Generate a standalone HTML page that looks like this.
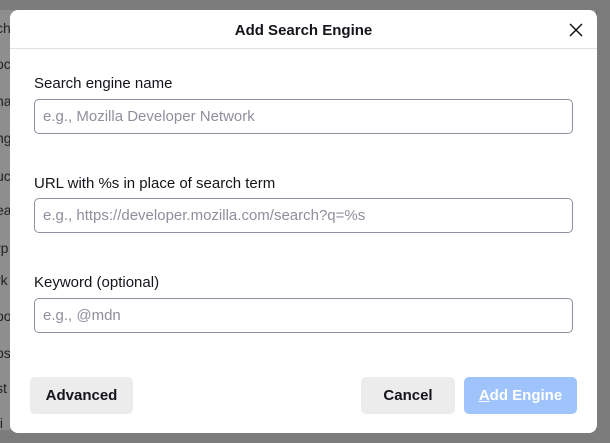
<!DOCTYPE html>
<html><head><style>
body{margin:0;width:610px;height:443px;background:#7c7c7c;position:relative;overflow:hidden;font-family:"Liberation Sans",sans-serif}
.bg{position:absolute;left:0;top:10px;width:596px;height:420px;background:#8e8e8e;border-right:1px solid #666}
.bgt{position:absolute;left:-4px;font-size:14px;color:#222}
.dlg{position:absolute;left:10px;top:10px;width:587px;height:423px;background:#fff;border-radius:8px}
.title{position:absolute;left:0;right:0;top:12px;text-align:center;font-weight:bold;font-size:15px;color:#15141a}
.hr{position:absolute;left:0;right:0;top:38px;height:1px;background:#e0e0e6}
.lbl{position:absolute;left:24px;font-size:15px;color:#15141a}
.inp{position:absolute;left:24px;width:539px;height:35px;border:1px solid #8f8f9d;border-radius:5px;box-sizing:border-box;padding-left:8px;line-height:33px;font-size:15px;color:#8f8f9d}
.btn{position:absolute;top:367px;height:37px;border-radius:5px;background:#ececec;font-weight:bold;font-size:15px;line-height:37px;text-align:center;color:#15141a}
</style></head><body>
<div class="bg">
<div class="bgt" style="top:10px">ch</div>
<div class="bgt" style="top:46px">oc</div>
<div class="bgt" style="top:83px">na</div>
<div class="bgt" style="top:120px">ng</div>
<div class="bgt" style="top:158px">uc</div>
<div class="bgt" style="top:192px">ea</div>
<div class="bgt" style="top:230px">rp</div>
<div class="bgt" style="top:262px">rk</div>
<div class="bgt" style="top:298px">oo</div>
<div class="bgt" style="top:335px">bs</div>
<div class="bgt" style="top:370px">st</div>
<div class="bgt" style="top:405px">ti</div>
</div>
<div class="dlg">
<div class="title">Add Search Engine</div>
<svg style="position:absolute;left:559px;top:13px" width="14" height="14" viewBox="0 0 14 14"><path d="M1 1L13 13M13 1L1 13" stroke="#15141a" stroke-width="1.5"/></svg>
<div class="hr"></div>
<div class="lbl" style="top:65px">Search engine name</div>
<div class="inp" style="top:89px">e.g., Mozilla Developer Network</div>
<div class="lbl" style="top:165px">URL with %s in place of search term</div>
<div class="inp" style="top:188px">e.g., https://developer.mozilla.com/search?q=%s</div>
<div class="lbl" style="top:264px">Keyword (optional)</div>
<div class="inp" style="top:288px">e.g., @mdn</div>
<div class="btn" style="left:20px;width:103px">Advanced</div>
<div class="btn" style="left:351px;width:94px">Cancel</div>
<div class="btn" style="left:454px;width:113px;background:#9fc4fb;color:#fff"><u>A</u>dd Engine</div>
</div>
</body></html>
